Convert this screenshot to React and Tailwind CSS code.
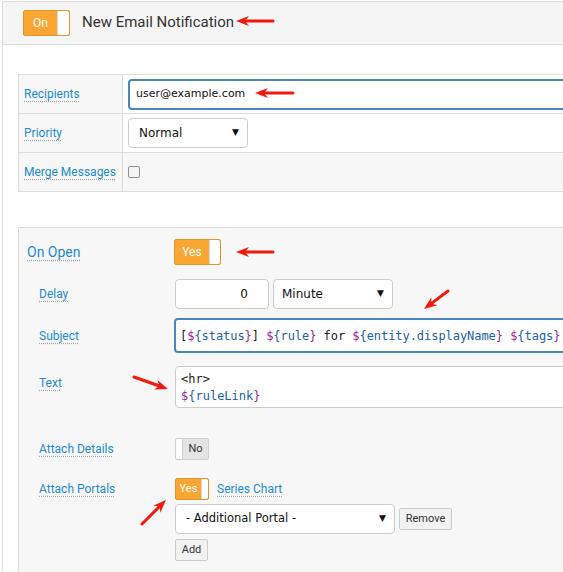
import React from 'react';

const LINK = 'text-[#1e8ad2] underline decoration-dotted decoration-[#9aa7b3] underline-offset-[3px]';
const SANS = { fontFamily: 'Roboto, "Open Sans", sans-serif' };
const MONO = { fontFamily: '"DejaVu Sans Mono", monospace' };
const INPUT = { fontFamily: '"DejaVu Sans", Verdana, sans-serif' };

const Toggle = ({ on = true, text, w, h, knob, size = 'text-[12px]' }) => (
  <div
    className={`flex shrink-0 rounded-[2px] border ${on ? 'border-[#e0962c] bg-[#f9a632]' : 'border-[#cfcfcf] bg-[#e4e4e4]'} ${w} ${h}`}
  >
    {!on && <div className={`${knob} bg-white border-r border-[#d0d0d0] rounded-l-[2px]`} />}
    <div className={`flex-1 flex items-center justify-center ${size} ${on ? 'text-white' : 'text-[#333]'}`}>{text}</div>
    {on && <div className={`${knob} bg-white border-l border-[#d8d8d8] rounded-r-[2px]`} />}
  </div>
);

const Select = ({ label, w, pl = 'pl-[10px]', size = 'text-[12px]' }) => (
  <div
    className={`flex items-center justify-between h-[30px] ${w} ${pl} pr-[8px] bg-white border border-[#cccccc] rounded-[4px] ${size} text-[#111]`}
    style={INPUT}
  >
    <span>{label}</span>
    <span className="text-[9px]">▼</span>
  </div>
);

const Btn = ({ children, w }) => (
  <div className={`flex items-center justify-center h-[22px] ${w} bg-[#f2f2f2] border border-[#cccccc] rounded-[2px] text-[11px] text-[#333]`}>
    {children}
  </div>
);

const V = ({ name }) => (
  <>
    <span className="text-[#9b2393]">$</span>
    <span className="text-[#2160a6]">{'{' + name}</span>
    <span className="text-[#9b2393]">{'}'}</span>
  </>
);

const Arrow = ({ x1, y1, x2, y2 }) => {
  const a = Math.atan2(y2 - y1, x2 - x1);
  const L = 13, W = 5, N = 9;
  const bx = x2 - L * Math.cos(a), by = y2 - L * Math.sin(a);
  const nx = x2 - N * Math.cos(a), ny = y2 - N * Math.sin(a);
  const px = -Math.sin(a) * W, py = Math.cos(a) * W;
  const pts = `${x2},${y2} ${bx + px},${by + py} ${nx},${ny} ${bx - px},${by - py}`;
  return (
    <g>
      <line x1={x1} y1={y1} x2={nx} y2={ny} stroke="#f0190c" strokeWidth="3" strokeLinecap="round" />
      <polygon points={pts} fill="#f0190c" />
    </g>
  );
};

const TableRow = ({ label, children, bg = 'bg-white' }) => (
  <div className={`flex h-[39px] border-b border-[#dddddd] ${bg}`}>
    <div className="w-[104px] shrink-0 flex items-center pl-[5px] bg-[#f7f7f7] border-r border-[#dddddd]">
      <span className={`text-[12px] ${LINK}`}>{label}</span>
    </div>
    <div className="flex-1 flex items-center pl-[5px]">{children}</div>
  </div>
);

const SubRow = ({ label, children, className = '', labelClass = 'items-center' }) => (
  <div className={`flex pl-[20px] ${className}`}>
    <div className={`w-[136px] shrink-0 flex ${labelClass}`}>
      <span className={`text-[12px] ${LINK}`}>{label}</span>
    </div>
    <div className="flex-1">{children}</div>
  </div>
);

export default function App() {
  return (
    <div className="relative w-[563px] h-[572px] overflow-hidden bg-white pl-[2px] pt-[1px]" style={SANS}>
      <div className="w-[700px] h-[600px] border-l border-t border-[#dddddd]">
        {/* header */}
        <div className="flex items-center h-[43px] pl-[20px] pb-[1px] bg-[#f5f5f5] border-b border-[#dddddd]">
          <Toggle text="On" w="w-[47px]" h="h-[26px]" knob="w-[12px]" />
          <span className="ml-[12px] text-[15px] text-[#333]">New Email Notification</span>
        </div>

        <div className="pl-[15px] pt-[29px]">
          {/* settings table */}
          <div className="border-t border-l border-[#dddddd]">
            <TableRow label="Recipients">
              <div
                className="flex items-center w-full h-[31px] pl-[6px] bg-white border-2 border-[#4a86b9] rounded-l-[4px] text-[11px] text-[#111]"
                style={INPUT}
              >
                user@example.com
              </div>
            </TableRow>
            <TableRow label="Priority">
              <Select label="Normal" w="w-[120px]" />
            </TableRow>
            <TableRow label="Merge Messages" bg="bg-[#f7f7f7]">
              <div className="w-[12px] h-[12px] bg-[#f4f4f4] border border-[#8f8f8f] rounded-[2px]" />
            </TableRow>
          </div>

          {/* on open section */}
          <div className="mt-[35px] h-[400px] bg-[#f7f7f7] border-t border-l border-[#dddddd] pt-[11px]">
            <div className="flex items-center pl-[8px]">
              <div className="w-[147px] shrink-0">
                <span className={`text-[14px] ${LINK}`}>On Open</span>
              </div>
              <Toggle text="Yes" w="w-[47px]" h="h-[26px]" knob="w-[11px]" />
            </div>

            <SubRow label="Delay" className="mt-[14px]">
              <div className="flex gap-[4px]">
                <div
                  className="flex items-center justify-end w-[94px] h-[30px] pr-[20px] bg-white border border-[#cccccc] rounded-[4px] text-[12px] text-[#111]"
                  style={INPUT}
                >
                  0
                </div>
                <Select label="Minute" w="w-[120px]" pl="pl-[8px]" />
              </div>
            </SubRow>

            <SubRow label="Subject" className="mt-[9px]">
              <div
                className="ml-[-1px] flex items-center h-[35px] pl-[4px] bg-white border-2 border-[#4a86b9] rounded-l-[4px] text-[12px] tracking-[-0.05px] text-[#222]"
                style={MONO}
              >
                <span className="whitespace-pre">
                  [<V name="status" />] <V name="rule" /> for <V name="entity.displayName" /> <V name="tags" />
                </span>
              </div>
            </SubRow>

            <SubRow label="Text" className="mt-[13px]" labelClass="items-start pt-[8px]">
              <div
                className="h-[42px] pl-[5px] pt-[4px] bg-white border border-[#cccccc] rounded-l-[4px] text-[12px] leading-[17px] text-[#222] whitespace-pre"
                style={MONO}
              >
                <div>{'<hr>'}</div>
                <div><V name="ruleLink" /></div>
              </div>
            </SubRow>

            <SubRow label="Attach Details" className="mt-[30px]">
              <Toggle on={false} text="No" w="w-[34px]" h="h-[22px]" knob="w-[7px]" size="text-[11px]" />
            </SubRow>

            <SubRow label="Attach Portals" className="mt-[18px]" labelClass="items-center h-[22px]">
              <div className="flex items-center">
                <Toggle text="Yes" w="w-[34px]" h="h-[22px]" knob="w-[7px]" size="text-[11px]" />
                <span className={`ml-[8px] text-[12px] ${LINK}`}>Series Chart</span>
              </div>
              <div className="flex items-center gap-[4px] mt-[4px]">
                <Select label="- Additional Portal -" w="w-[220px]" size="text-[11.5px]" />
                <Btn w="w-[53px]">Remove</Btn>
              </div>
              <div className="mt-[5px]">
                <Btn w="w-[33px]">Add</Btn>
              </div>
            </SubRow>
          </div>
        </div>
      </div>

      {/* annotation arrows */}
      <svg className="absolute left-0 top-0 pointer-events-none" width="563" height="572">
        <Arrow x1={273} y1={21} x2={236} y2={21} />
        <Arrow x1={293} y1={93} x2={255} y2={93} />
        <Arrow x1={273} y1={252} x2={236} y2={252} />
        <Arrow x1={448} y1={291} x2={424} y2={309} />
        <Arrow x1={134} y1={377} x2={168} y2={389} />
        <Arrow x1={142} y1={524} x2={166} y2={500} />
      </svg>
    </div>
  );
}
